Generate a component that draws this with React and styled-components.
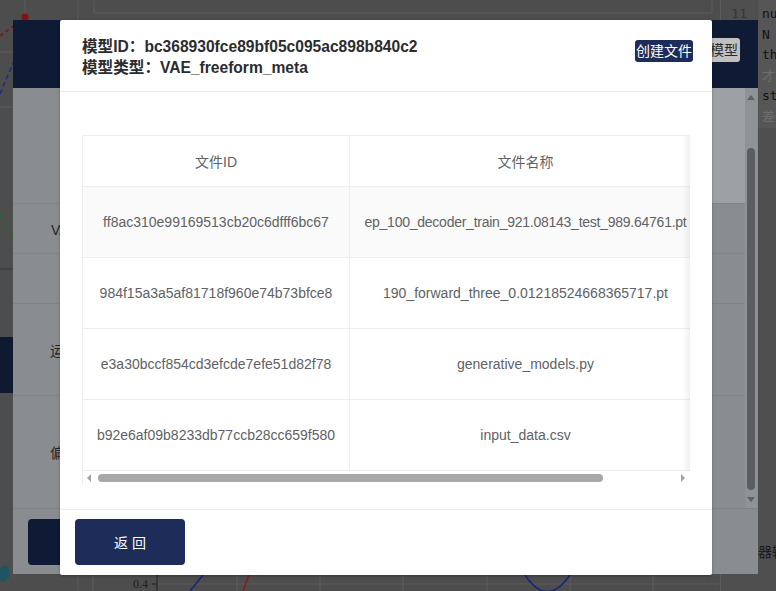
import React from "react";
import styled, { createGlobalStyle } from "styled-components";

const GlobalStyle = createGlobalStyle`
  html, body { margin: 0; padding: 0; }
  body {
    width: 776px;
    height: 591px;
    overflow: hidden;
    background: #4d4d4d;
    font-family: "Liberation Sans", "Noto Sans CJK SC", sans-serif;
  }
  * { box-sizing: border-box; }
`;

const NAVY = "#1e2c5a";
const NAVY_DIM = "#0f1a35";

/* ---------- page behind ---------- */
const Scene = styled.div`
  position: relative;
  width: 776px;
  height: 591px;
  display: flex;
  overflow: hidden;
  background: #4d4d4d;
`;

const ChartArea = styled.div`
  flex: 1;
  svg { display: block; }
`;

const CodePanel = styled.div`
  width: 56px;
  display: flex;
  flex-direction: column;
  background: #4f4f4f;
  border-left: 1px solid #5d5d5d;
`;

const CodeEditor = styled.div`
  display: flex;
`;

const Gutter = styled.div`
  width: 37px;
  padding: 4px 11px 0 0;
  text-align: right;
  font: 13px/20.6px "DejaVu Sans Mono", monospace;
  color: #363636;
`;

const CodeLines = styled.div`
  flex: 1;
  padding: 4px 0 0 4px;
  background: #565656;
  overflow: hidden;
  white-space: nowrap;
  font: 13px/20.6px "DejaVu Sans Mono", "Noto Sans CJK SC", monospace;
  color: #111;
`;

const CodeLine = styled.div`
  color: ${(p) => (p.$comment ? "#6d6d6d" : "#111")};
`;

const Caption = styled.div`
  margin-top: auto;
  padding: 0 0 29px 23px;
  font-size: 14px;
  line-height: 20px;
  color: #1c1c1c;
  white-space: nowrap;
`;

/* ---------- modal underneath ---------- */
const BackModal = styled.div`
  position: absolute;
  left: 13px;
  top: 20px;
  width: 745px;
  height: 554px;
  display: flex;
  flex-direction: column;
  background: #8a8d90;
`;

const BackHeader = styled.div`
  height: 68px;
  background: ${NAVY_DIM};
  display: flex;
  justify-content: flex-end;
  align-items: flex-start;
  padding: 18px 18px 0 0;
`;

const GhostButton = styled.div`
  height: 24px;
  line-height: 24px;
  padding: 0 2px;
  background: #c0c0c0;
  color: #2b2b2b;
  font-size: 14px;
  border-radius: 3px;
`;

const BackMain = styled.div`
  flex: 1;
  display: flex;
  min-height: 0;
`;

const BackForm = styled.div`
  flex: 1;
  display: flex;
  flex-direction: column;
`;

const IntroBand = styled.div`
  height: 115px;
  display: flex;
  justify-content: flex-end;
`;

const PreviewCard = styled.div`
  width: 60px;
  background: #9ea1a4;
`;

const FormRow = styled.div`
  height: ${(p) => p.$h}px;
  display: flex;
  align-items: center;
  border-top: 1px solid #818487;
`;

const FieldLabel = styled.div`
  width: 93px;
  text-align: right;
  font-size: 14px;
  color: #262626;
  white-space: nowrap;
`;

const BackScroll = styled.div`
  width: 12px;
  margin-right: 1px;
  background: #909396;
  display: flex;
  flex-direction: column;
  align-items: center;
`;

const ArrowV = styled.div`
  height: 18px;
  display: flex;
  align-items: center;
  justify-content: center;
  &::before {
    content: "";
    border-left: 4px solid transparent;
    border-right: 4px solid transparent;
    ${(p) =>
      p.$down
        ? "border-top: 5px solid #5e6063;"
        : "border-bottom: 5px solid #5e6063;"}
  }
`;

const VThumb = styled.div`
  width: 8px;
  height: 342px;
  margin-top: 42px;
  border-radius: 4px;
  background: #5b5d60;
`;

const BackFooter = styled.div`
  height: 66px;
  border-top: 1px solid #7f8285;
  padding: 10px 15px;
`;

const BackButton = styled.div`
  width: 110px;
  height: 46px;
  border-radius: 4px;
  background: ${NAVY_DIM};
`;

/* ---------- top dialog ---------- */
const Dialog = styled.div`
  position: absolute;
  left: 60px;
  top: 20px;
  width: 652px;
  height: 555px;
  display: flex;
  flex-direction: column;
  background: #fff;
  border-radius: 2px;
  box-shadow: 0 1px 3px rgba(0, 0, 0, 0.3);
`;

const DialogHeader = styled.div`
  display: flex;
  justify-content: space-between;
  align-items: flex-start;
  padding: 16px 19px 13px 22px;
  border-bottom: 1px solid #ebeef5;
`;

const TitleBlock = styled.div`
  font-size: 15.6px;
  font-weight: 700;
  line-height: 21px;
  color: #2b2c2e;
`;

const CreateButton = styled.button`
  margin-top: 4px;
  height: 22px;
  line-height: 22px;
  padding: 0 1px;
  border: none;
  border-radius: 3px;
  background: ${NAVY};
  color: #fff;
  font-family: inherit;
  font-size: 14px;
  cursor: pointer;
`;

const DialogBody = styled.div`
  flex: 1;
  padding: 43px 22px 0;
`;

const TableBox = styled.div`
  position: relative;
  border-top: 1px solid #ebeef5;
  border-left: 1px solid #ebeef5;
  &::after {
    content: "";
    position: absolute;
    right: 0;
    top: 0;
    bottom: 14px;
    width: 8px;
    background: linear-gradient(to right, rgba(0, 0, 0, 0), rgba(0, 0, 0, 0.06));
  }
`;

const TableScroll = styled.div`
  overflow: hidden;
`;

const TableGrid = styled.div`
  width: 619px;
`;

const Row = styled.div`
  display: grid;
  grid-template-columns: 267px 352px;
  height: ${(p) => (p.$head ? 51 : 71)}px;
  border-bottom: 1px solid #ebeef5;
  background: ${(p) => (p.$hover ? "#fafafa" : "#fff")};
`;

const Cell = styled.div`
  display: flex;
  align-items: center;
  justify-content: center;
  border-right: 1px solid #ebeef5;
  font-size: 14px;
  letter-spacing: ${(p) => (p.$tight ? "-0.25px" : "0")};
  color: #606266;
  white-space: nowrap;
  overflow: hidden;
`;

const HScrollbar = styled.div`
  height: 14px;
  display: flex;
  align-items: center;
  padding: 0 5px 0 4px;
  background: #fff;
`;

const ArrowH = styled.div`
  width: 0;
  height: 0;
  border-top: 4px solid transparent;
  border-bottom: 4px solid transparent;
  ${(p) =>
    p.$right
      ? "border-left: 4px solid #a3a3a3; margin-left: auto;"
      : "border-right: 4px solid #a3a3a3;"}
`;

const HThumb = styled.div`
  margin-left: 7px;
  width: 505px;
  height: 8px;
  border-radius: 4px;
  background: #a8a8a8;
`;

const DialogFooter = styled.div`
  border-top: 1px solid #ebeef5;
  padding: 9px 15px 10px;
`;

const PrimaryButton = styled.button`
  width: 110px;
  height: 46px;
  border: none;
  border-radius: 4px;
  background: ${NAVY};
  color: #fff;
  font-family: inherit;
  font-size: 14px;
  cursor: pointer;
`;

const files = [
  { id: "ff8ac310e99169513cb20c6dfff6bc67", name: "ep_100_decoder_train_921.08143_test_989.64761.pt" },
  { id: "984f15a3a5af81718f960e74b73bfce8", name: "190_forward_three_0.01218524668365717.pt" },
  { id: "e3a30bccf854cd3efcde7efe51d82f78", name: "generative_models.py" },
  { id: "b92e6af09b8233db77ccb28cc659f580", name: "input_data.csv" },
];

function BackdropChart() {
  const grid = "#5c5c5c";
  return (
    <svg width="719" height="591" viewBox="0 0 719 591">
      <path d="M94 0 V13 H712 V0" fill="none" stroke={grid} strokeWidth="1" />
      <path d="M78 0 V591" stroke={grid} strokeWidth="1" />
      <path d="M25 0 V17" stroke={grid} strokeWidth="1" />
      <path d="M0 52 H13 M0 107 H13" stroke={grid} strokeWidth="1" />
      <path d="M0 36 L25 17" stroke="#7a1414" strokeWidth="1.5" strokeDasharray="4 3" fill="none" />
      <circle cx="25" cy="17" r="3.5" fill="#8a1010" />
      <path d="M0 94 L16 56" stroke="#1e2a8c" strokeWidth="1.5" strokeDasharray="5 3" fill="none" />
      <path d="M0 214 L15 244" stroke="#1c6a2a" strokeWidth="1.5" strokeDasharray="5 3" fill="none" />
      <path d="M0 269 H13" stroke="#3b3b3b" strokeWidth="1" />
      <rect x="0" y="337" width="13" height="56" fill="#0f1a30" />
      <polygon points="0,568 6,565 9,568 9,578 3,582 0,580" fill="#1f5560" />
      <path
        d="M93 575 V591 M237 575 V591 M320 575 V591 M403 575 V591 M487 575 V591 M570 575 V591 M653 575 V591"
        stroke={grid}
        strokeWidth="1"
      />
      <path d="M157 584 H719" stroke={grid} strokeWidth="1" />
      <path d="M157 575 V591 M152 584 H157" stroke="#222" strokeWidth="1" />
      <text x="133" y="588" fontFamily="'Liberation Serif', serif" fontSize="12" fill="#1e1e1e">
        0.4
      </text>
      <path d="M190 591 L203 575" stroke="#1a237e" strokeWidth="1.5" fill="none" />
      <path d="M243 591 L249 575" stroke="#8b1a1a" strokeWidth="1.5" fill="none" />
      <path d="M525 575 Q547 608 570 575" stroke="#1a237e" strokeWidth="1.5" fill="none" />
    </svg>
  );
}

export default function App() {
  return (
    <>
      <GlobalStyle />
      <Scene>
        <ChartArea>
          <BackdropChart />
        </ChartArea>
        <CodePanel>
          <CodeEditor>
            <Gutter>
              <div>11</div>
              <div>12</div>
              <div>13</div>
              <div>14</div>
              <div>15</div>
              <div>16</div>
            </Gutter>
            <CodeLines>
              <CodeLine>num_epochs = 100</CodeLine>
              <CodeLine>N = 5</CodeLine>
              <CodeLine>threshold = 0.5</CodeLine>
              <CodeLine $comment>才能收敛</CodeLine>
              <CodeLine>step = 1</CodeLine>
              <CodeLine $comment>差值阈值</CodeLine>
            </CodeLines>
          </CodeEditor>
          <Caption>码器输出</Caption>
        </CodePanel>

        <BackModal>
          <BackHeader>
            <GhostButton>导入模型</GhostButton>
          </BackHeader>
          <BackMain>
            <BackForm>
              <IntroBand>
                <PreviewCard />
              </IntroBand>
              <FormRow $h={50}>
                <FieldLabel>VAE类型</FieldLabel>
              </FormRow>
              <FormRow $h={50}>
                <FieldLabel>Python</FieldLabel>
              </FormRow>
              <FormRow $h={92}>
                <FieldLabel>运行环境</FieldLabel>
              </FormRow>
              <FormRow $h={113}>
                <FieldLabel>偏差设置</FieldLabel>
              </FormRow>
            </BackForm>
            <BackScroll>
              <ArrowV />
              <VThumb />
              <ArrowV $down />
            </BackScroll>
          </BackMain>
          <BackFooter>
            <BackButton />
          </BackFooter>
        </BackModal>

        <Dialog>
          <DialogHeader>
            <TitleBlock>
              <div>模型ID：bc368930fce89bf05c095ac898b840c2</div>
              <div>模型类型：VAE_freeform_meta</div>
            </TitleBlock>
            <CreateButton>创建文件</CreateButton>
          </DialogHeader>
          <DialogBody>
            <TableBox>
              <TableScroll>
                <TableGrid>
                  <Row $head>
                    <Cell>文件ID</Cell>
                    <Cell>文件名称</Cell>
                  </Row>
                  {files.map((f, i) => (
                    <Row key={f.id} $hover={i === 0}>
                      <Cell>{f.id}</Cell>
                      <Cell $tight={f.name.length > 40}>{f.name}</Cell>
                    </Row>
                  ))}
                </TableGrid>
              </TableScroll>
              <HScrollbar>
                <ArrowH />
                <HThumb />
                <ArrowH $right />
              </HScrollbar>
            </TableBox>
          </DialogBody>
          <DialogFooter>
            <PrimaryButton>返 回</PrimaryButton>
          </DialogFooter>
        </Dialog>
      </Scene>
    </>
  );
}
